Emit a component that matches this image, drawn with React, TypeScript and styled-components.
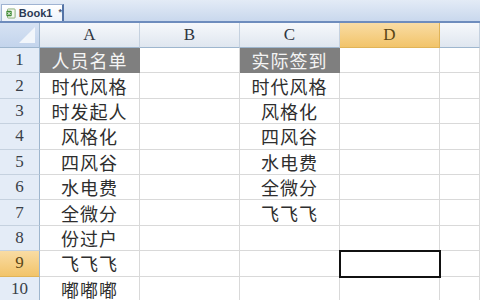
import React from 'react';
import styled, { createGlobalStyle, css } from 'styled-components';

const GlobalStyle = createGlobalStyle`
  html, body {
    margin: 0;
    padding: 0;
    background: #ffffff;
    overflow: hidden;
  }
`;

const Window = styled.div`
  width: 480px;
  height: 300px;
  overflow: hidden;
  display: flex;
  flex-direction: column;
  background: #ffffff;
  font-family: "Liberation Serif", "Noto Sans CJK SC", serif;
`;

const TabBar = styled.div`
  height: 21px;
  flex: none;
  display: flex;
  align-items: flex-end;
  padding-left: 1px;
  background: linear-gradient(#e3ebf6, #c9d8ed);
  border-bottom: 2px solid #6e8cbd;
`;

const Tab = styled.div`
  height: 17px;
  width: 63px;
  display: flex;
  align-items: center;
  gap: 3px;
  padding-left: 4px;
  box-sizing: border-box;
  background: linear-gradient(#ffffff, #eef3fa);
  border: 1px solid #9fb3d2;
  border-bottom: none;
  border-right: 2px solid #5574a6;
  font-family: "Liberation Sans", sans-serif;
  font-size: 11px;
  font-weight: bold;
  color: #2b3a55;
`;

const Star = styled.span`
  font-size: 9px;
  margin-left: 3px;
  margin-top: -3px;
  color: #4a5670;
`;

const Sheet = styled.div`
  flex: 1;
  display: grid;
  grid-template-columns: 40px repeat(4, 100px) 1fr;
  grid-template-rows: 25px repeat(10, 25.4px);
`;

const headerBase = css`
  box-sizing: border-box;
  display: flex;
  align-items: center;
  justify-content: center;
  font-family: "Liberation Serif", serif;
  font-size: 17px;
`;

const Corner = styled.div`
  position: relative;
  background: linear-gradient(#d6e2f3, #c3d4ec);
  border-right: 1px solid #9eb6ce;
  border-bottom: 1px solid #9eb6ce;
  box-sizing: border-box;
  overflow: hidden;

  &::after {
    content: '';
    position: absolute;
    right: 4px;
    bottom: 4px;
    width: 0;
    height: 0;
    border-left: 16px solid transparent;
    border-bottom: 16px solid #f2f6fb;
  }
`;

const ColHeader = styled.div<{ $active?: boolean }>`
  ${headerBase};
  color: ${p => (p.$active ? '#5a4616' : '#2f3540')};
  background: ${p =>
    p.$active
      ? 'linear-gradient(#f9dca4, #f2c46a)'
      : 'linear-gradient(#f6f8fb, #dfe6ef)'};
  border-right: 1px solid ${p => (p.$active ? '#e0b458' : '#c5d1df')};
  border-bottom: 1px solid ${p => (p.$active ? '#e0b458' : '#9eb6ce')};
`;

const RowHeader = styled.div<{ $active?: boolean }>`
  ${headerBase};
  color: ${p => (p.$active ? '#5a4616' : '#3a3f48')};
  background: ${p =>
    p.$active ? 'linear-gradient(#f9dca4, #f2c46a)' : '#e4ecf7'};
  border-right: 1px solid #9eb6ce;
  border-bottom: 1px solid ${p => (p.$active ? '#e0b458' : '#c5d1df')};
`;

const Cell = styled.div<{ $title?: boolean; $selected?: boolean }>`
  box-sizing: border-box;
  display: flex;
  align-items: center;
  justify-content: center;
  border-right: 1px solid #d9d9d9;
  border-bottom: 1px solid #d9d9d9;
  font-family: "Noto Sans CJK SC", sans-serif;
  font-size: 18px;
  letter-spacing: 1px;
  color: #2e2e2e;
  white-space: nowrap;
  overflow: visible;
  ${p =>
    p.$title &&
    css`
      background: #7f7f7f;
      color: #f4f4f4;
      border-color: #7f7f7f;
    `}
  ${p =>
    p.$selected &&
    css`
      outline: 2px solid #111111;
      outline-offset: -1px;
      position: relative;
      z-index: 1;
    `}
`;

const ExcelIcon: React.FC = () => (
  <svg width="13" height="13" viewBox="0 0 13 13">
    <rect x="2" y="0.5" width="10" height="12" rx="1" fill="#f3f7ee" stroke="#6e9a57" />
    <rect x="0.5" y="3" width="7" height="7" rx="1" fill="#3f8a34" />
    <path d="M2 4.5 L6 8.5 M6 4.5 L2 8.5" stroke="#ffffff" strokeWidth="1.3" />
  </svg>
);

const columns = ['A', 'B', 'C', 'D', ''];

const listA = ['人员名单', '时代风格', '时发起人', '风格化', '四风谷', '水电费', '全微分', '份过户', '飞飞飞', '嘟嘟嘟'];
const listC = ['实际签到', '时代风格', '风格化', '四风谷', '水电费', '全微分', '飞飞飞', '', '', ''];

const App: React.FC = () => {
  return (
    <Window>
      <GlobalStyle />
      <TabBar>
        <Tab>
          <ExcelIcon />
          Book1
          <Star>*</Star>
        </Tab>
      </TabBar>
      <Sheet>
        <Corner />
        {columns.map((c, i) => (
          <ColHeader key={i} $active={c === 'D'}>{c}</ColHeader>
        ))}
        {listA.map((a, r) => (
          <React.Fragment key={r}>
            <RowHeader $active={r === 8}>{r + 1}</RowHeader>
            <Cell $title={r === 0}>{a}</Cell>
            <Cell />
            <Cell $title={r === 0}>{listC[r]}</Cell>
            <Cell $selected={r === 8} />
            <Cell />
          </React.Fragment>
        ))}
      </Sheet>
    </Window>
  );
};

export default App;
